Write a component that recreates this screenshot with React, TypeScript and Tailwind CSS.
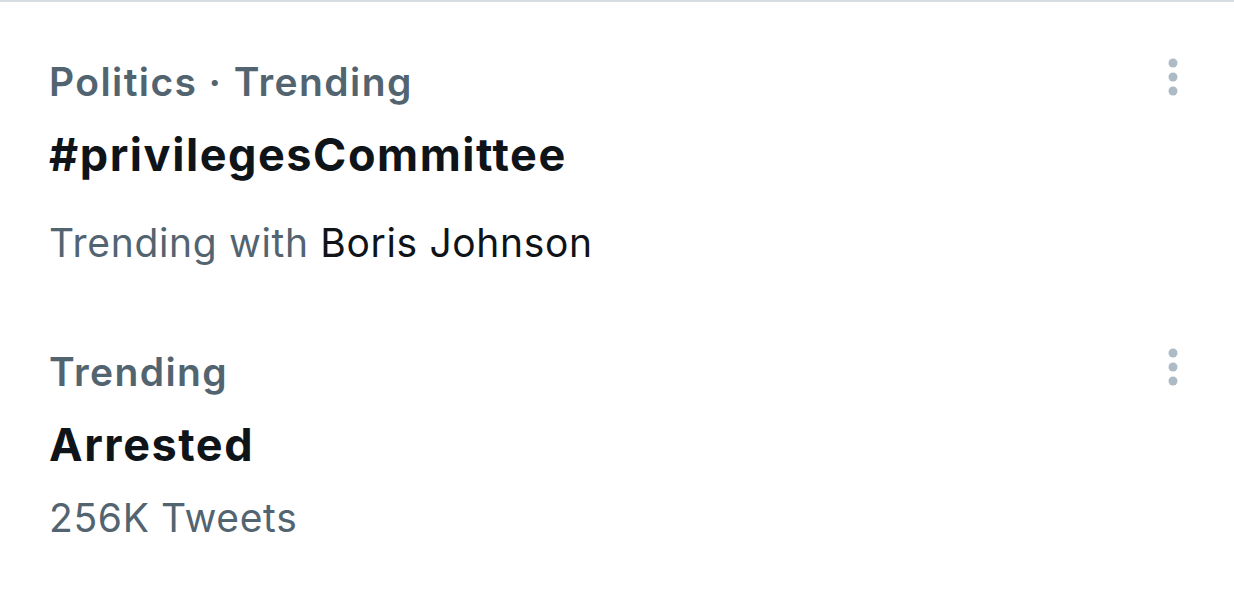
import React from 'react';

type Trend = {
  meta: string;
  title: string;
  sub: React.ReactNode;
  titleGap: string;
  subGap: string;
};

const MoreIcon = () => (
  <svg width="18" height="44" viewBox="0 0 18 44" aria-hidden="true" className="shrink-0">
    <circle cx="9" cy="8" r="4.5" fill="#aebac4" />
    <circle cx="9" cy="22" r="4.5" fill="#aebac4" />
    <circle cx="9" cy="36" r="4.5" fill="#aebac4" />
  </svg>
);

const TrendItem = ({ trend, top }: { trend: Trend; top: string }) => (
  <div className={`flex items-start justify-between pl-[49px] pr-[52px] ${top}`}>
    <div className="flex flex-col">
      <div className="text-[39px] leading-[48px] font-semibold tracking-[1.4px] text-[#536471]">{trend.meta}</div>
      <div className={`${trend.titleGap} text-[45px] leading-[60px] font-bold tracking-[1.55px] text-[#0f1419]`}>{trend.title}</div>
      <div className={`${trend.subGap} text-[39px] leading-[48px] tracking-[0.65px] text-[#536471]`}>{trend.sub}</div>
    </div>
    <div className="mt-[-3px]">
      <MoreIcon />
    </div>
  </div>
);

export default function App() {
  const trends: Trend[] = [
    {
      meta: 'Politics · Trending',
      title: '#privilegesCommittee',
      sub: (
        <>
          Trending with <span className="text-[#0f1419]">Boris Johnson</span>
        </>
      ),
      titleGap: 'mt-[19px]',
      subGap: 'mt-[34px]',
    },
    {
      meta: 'Trending',
      title: 'Arrested',
      sub: '256K Tweets',
      titleGap: 'mt-[19px]',
      subGap: 'mt-[19px]',
    },
  ];

  return (
    <div className="w-[1234px] h-[600px] bg-white border-t-2 border-[#d5dde3] overflow-hidden font-['Inter',sans-serif]">
      <TrendItem trend={trends[0]} top="pt-[56px]" />
      <TrendItem trend={trends[1]} top="pt-[81px]" />
    </div>
  );
}
